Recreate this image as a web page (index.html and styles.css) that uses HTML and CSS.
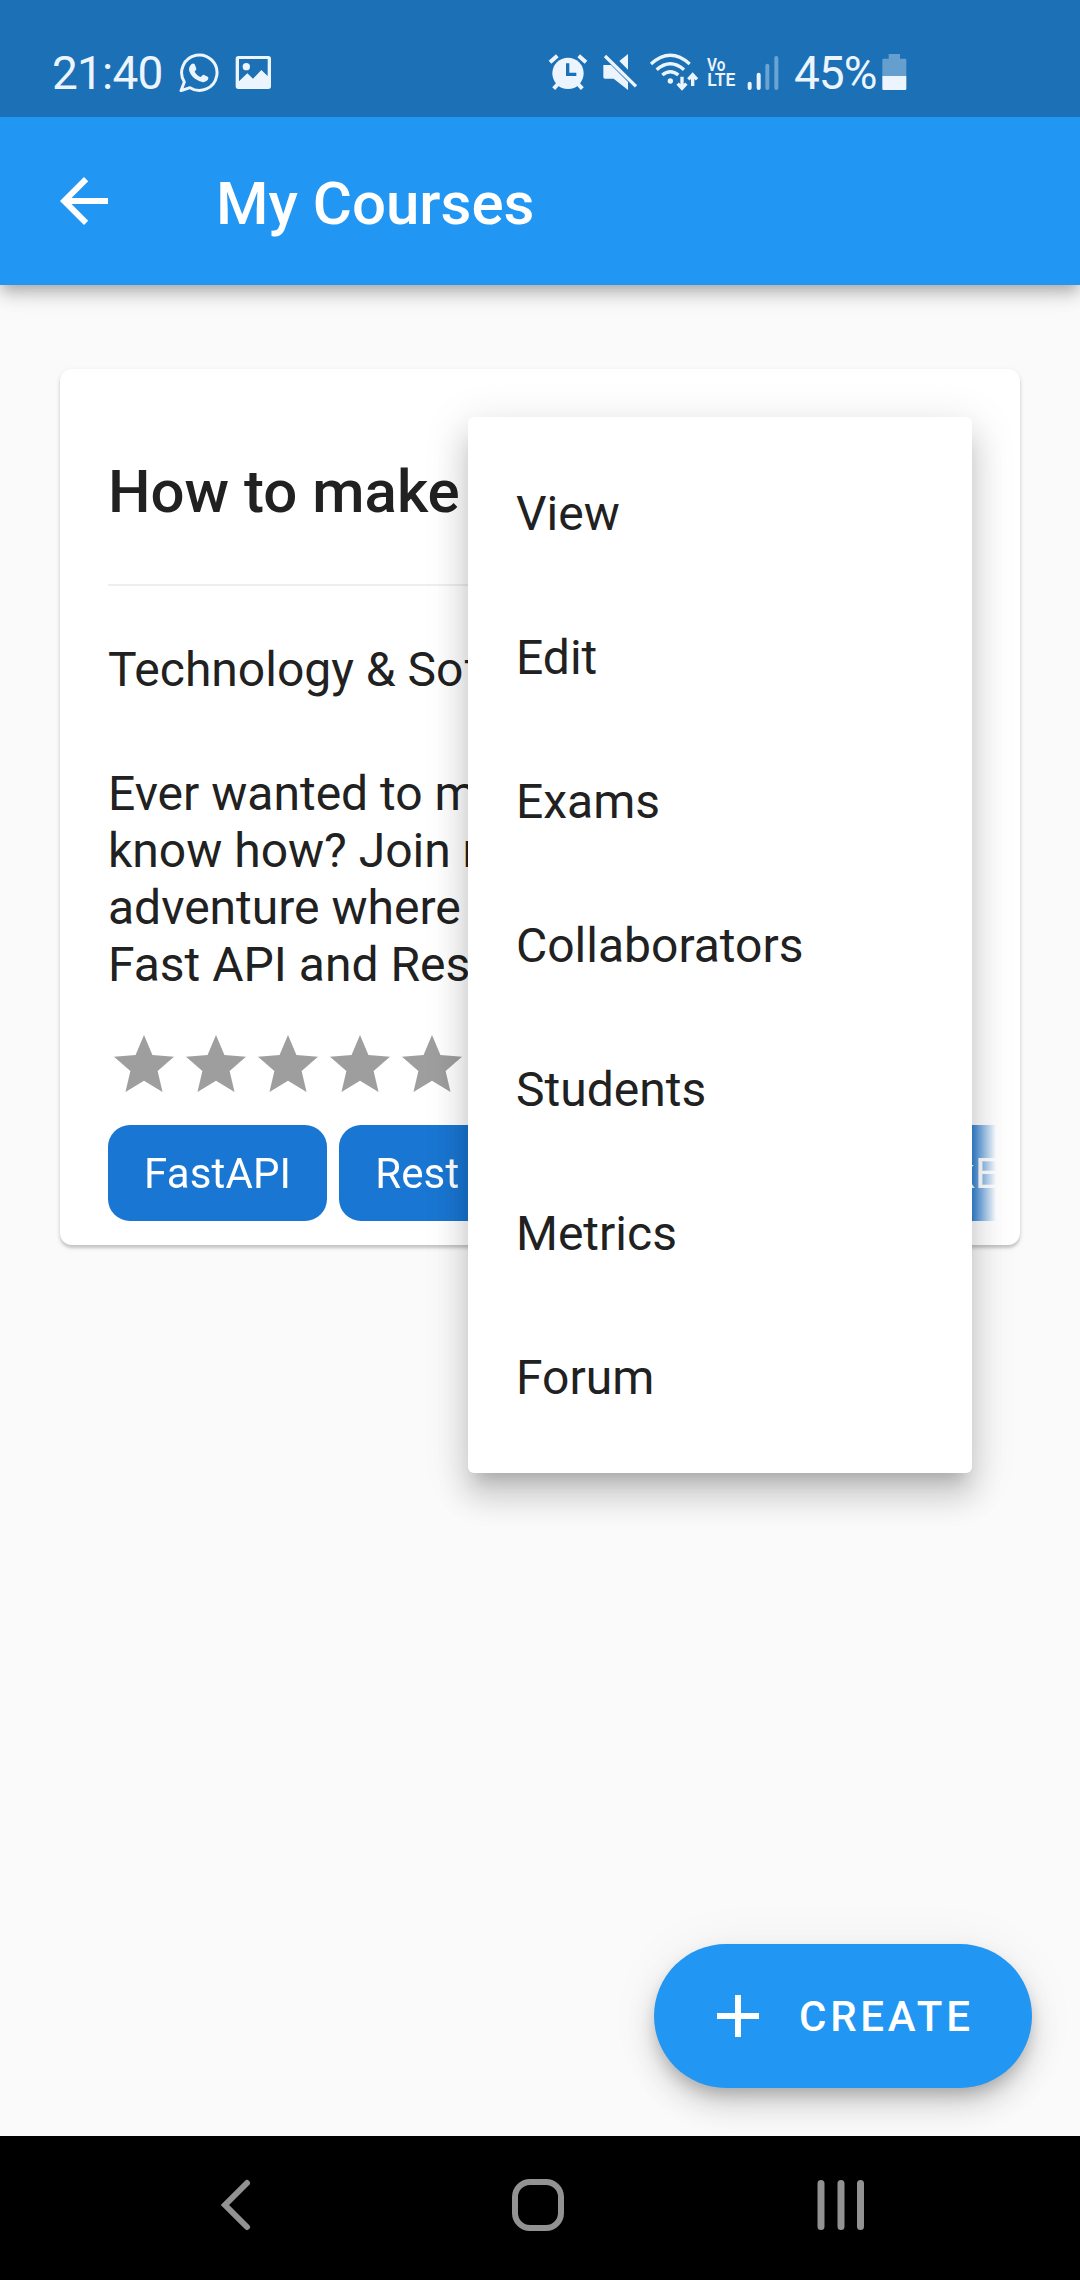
FILE: index.html
```
<!DOCTYPE html>
<html lang="en">
<head>
<meta charset="utf-8">
<title>My Courses</title>
<link rel="stylesheet" href="styles.css">
</head>
<body>
<div class="screen">
  <div class="status-bar">
    <span class="clock">21:40</span>
    <svg class="whatsapp" viewBox="447 66 120 120" width="40" height="40" fill="none">
      <path d="M463 156 L453 182 L480 173 A53 53 0 1 0 463 156Z" stroke="#ecf4fd" stroke-width="9" stroke-linejoin="round"/>
      <path d="M485 102c5-4 9-1 11 5l3 9c1 3-4 6-5 9 4 8 10 13 18 16 3-2 6-8 9-7l12 6c4 2 2 8-1 11-6 6-14 7-23 3-17-7-26-17-31-30-3-8 1-17 7-22z" fill="#ecf4fd"/>
    </svg>
    <svg class="photo" viewBox="614 66 111 120" width="37" height="40">
      <path fill="#ecf4fd" fill-rule="evenodd" d="M624 78h90q8 0 8 8v83q0 8-8 8h-90q-8 0-8-8V86q0-8 8-8zM626 87v67l25-24 17 16 25-26 19 18V87z"/>
      <circle cx="648" cy="110" r="11" fill="#ecf4fd"/>
    </svg>
    <div class="status-right">
      <svg viewBox="54 66 120 120" width="40" height="40" fill="none" stroke="#ecf4fd">
        <circle cx="114" cy="130" r="47" fill="#ecf4fd" stroke="none"/>
        <path stroke-width="12" d="M60 97l22-20M168 97l-22-20M71 176l14-15M157 176l-14-15"/>
        <path stroke="#1b70b6" stroke-width="10" d="M113 100v33h26"/>
      </svg>
      <svg class="mute" viewBox="216 66 108 120" width="36" height="40">
        <path fill="#ecf4fd" d="M220 105h23l51 51v24l-43-34h-26q-5 0-5-5zM294 72v47l-26-26z"/>
        <path stroke="#1b70b6" stroke-width="5" d="M233 72l92 90"/>
        <path stroke="#ecf4fd" stroke-width="10" d="M225 78l93 91"/>
      </svg>
      <svg class="wifi" viewBox="357 66 150 120" width="50" height="40" fill="none" stroke="#ecf4fd" stroke-width="10">
        <path d="M363 102Q421 50 479 102M380 119Q421 83 462 119M397 135Q421 115 445 135"/>
        <circle cx="421" cy="153" r="8" fill="#ecf4fd" stroke="none"/>
        <path d="M456 140v34M443 161l13 14 13-14M488 168v-30M475 148l13-14 13 14"/>
      </svg>
      <svg class="volte" viewBox="528 66 90 120" width="30" height="40" fill="#ecf4fd">
        <text x="531" y="122" textLength="55" lengthAdjust="spacingAndGlyphs">Vo</text>
        <text x="532" y="168" textLength="84" lengthAdjust="spacingAndGlyphs">LTE</text>
      </svg>
      <svg class="signal" viewBox="651 66 96 120" width="32" height="40" fill="none" stroke-width="12" stroke-linecap="round">
        <path stroke="#ecf4fd" d="M659 161v13M686 134v40"/>
        <path stroke="#6ba3d3" d="M712 107v67M739 84v90"/>
      </svg>
      <span class="percent">45%</span>
      <svg class="battery" viewBox="1058 66 75 120" width="25" height="40">
        <path fill="#659fd0" d="M1078 72h34v14h16q3 0 3 3v50h-72V89q0-3 3-3h16z"/>
        <path fill="#ecf4fd" d="M1059 138h72v38q0 4-4 4h-64q-4 0-4-4z"/>
      </svg>
    </div>
  </div>

  <header class="app-bar">
    <svg class="back" viewBox="0 0 24 24" width="72" height="72" fill="#fff"><path d="M20 11H7.830l5.590-5.590L12 4l-8 8 8 8 1.410-1.410L7.830 13H20v-2z"/></svg>
    <h1 class="app-title">My Courses</h1>
  </header>

  <main class="content">
    <article class="card">
      <h2 class="card-title">How to make</h2>
      <div class="card-body">
        <p class="category">Technology &amp; Software</p>
        <p class="description">Ever wanted to make<br>know how? Join me<br>adventure where<br>Fast API and Rest</p>
      </div>
      <div class="stars">
        <svg viewBox="0 0 24 24"><path d="M12 17.270L18.180 21l-1.640-7.030L22 9.240l-7.190-.61L12 2 9.190 8.630 2 9.240l5.460 4.730L5.820 21z"/></svg>
        <svg viewBox="0 0 24 24"><path d="M12 17.270L18.180 21l-1.640-7.030L22 9.240l-7.190-.61L12 2 9.190 8.630 2 9.240l5.460 4.730L5.820 21z"/></svg>
        <svg viewBox="0 0 24 24"><path d="M12 17.270L18.180 21l-1.640-7.030L22 9.240l-7.190-.61L12 2 9.190 8.630 2 9.240l5.460 4.730L5.820 21z"/></svg>
        <svg viewBox="0 0 24 24"><path d="M12 17.270L18.180 21l-1.640-7.030L22 9.240l-7.190-.61L12 2 9.190 8.630 2 9.240l5.460 4.730L5.820 21z"/></svg>
        <svg viewBox="0 0 24 24"><path d="M12 17.270L18.180 21l-1.640-7.030L22 9.240l-7.190-.61L12 2 9.190 8.630 2 9.240l5.460 4.730L5.820 21z"/></svg>
      </div>
      <div class="chips">
        <span class="chip">FastAPI</span>
        <span class="chip chip-wide">Rest</span>
        <span class="chip">BackEnd</span>
      </div>
    </article>
    <button class="fab">
      <svg viewBox="0 0 24 24" width="72" height="72" fill="#fff"><path d="M19 13h-6v6h-2v-6H5v-2h6V5h2v6h6v2z"/></svg>
      <span class="fab-label">CREATE</span>
    </button>
  </main>

  <nav class="nav-bar">
    <svg class="nav-back" viewBox="0 0 34 56" width="34" height="56" fill="none" stroke="#929292" stroke-width="6"><path stroke-linecap="round" d="M28 6L6 28l22 22"/></svg>
    <svg class="nav-home" viewBox="0 0 54 54" width="54" height="54" fill="none" stroke="#929292" stroke-width="6"><rect x="4" y="4" width="46" height="46" rx="15"/></svg>
    <svg class="nav-recents" viewBox="0 0 50 54" width="50" height="54" stroke="#929292" stroke-width="7" stroke-linecap="round"><path d="M5 5.500v43M25 5.500v43M44.500 5.500v43"/></svg>
  </nav>

  <ul class="menu">
    <li>View</li>
    <li>Edit</li>
    <li>Exams</li>
    <li>Collaborators</li>
    <li>Students</li>
    <li>Metrics</li>
    <li>Forum</li>
  </ul>
</div>
</body>
</html>
```
FILE: styles.css
```
* { box-sizing: border-box; margin: 0; padding: 0; }
body { font-family: Roboto, "Liberation Sans", sans-serif; color: #212121; background: #fafafa; }
svg { display: block; flex: none; }

.screen {
  position: relative;
  display: flex;
  flex-direction: column;
  width: 1080px;
  height: 2280px;
  overflow: hidden;
}

.status-bar {
  position: relative;
  z-index: 2;
  display: flex;
  height: 117px;
  flex: none;
  padding: 52px 173px 0 52px;
  background: #1b70b6;
  color: #ecf4fd;
}
.clock, .percent { font-size: 46px; line-height: 43px; white-space: nowrap; }
.clock { width: 127px; letter-spacing: -0.8px; }
.photo { margin-left: 16px; }
.status-right { display: flex; margin-left: auto; }
.mute { margin-left: 14px; }
.wifi { margin-left: 11px; }
.volte { margin-left: 7px; font-size: 54px; font-weight: 600; }
.signal { margin-left: 11px; }
.percent { width: 88px; margin-left: 15px; letter-spacing: -1px; }

.app-bar {
  position: relative;
  z-index: 1;
  display: flex;
  align-items: center;
  flex: none;
  height: 168px;
  padding-left: 48px;
  gap: 96px;
  background: #2196f3;
  color: #fff;
  box-shadow: 0 6px 12px -3px rgba(0,0,0,.2), 0 12px 15px rgba(0,0,0,.12), 0 3px 30px rgba(0,0,0,.08);
}
.app-title { font-size: 60px; font-weight: 500; line-height: 72px; padding-top: 6px; }

.content {
  display: flex;
  flex: 1;
  flex-direction: column;
  justify-content: space-between;
  padding: 84px 48px 48px 60px;
}
.card {
  display: flex;
  flex-direction: column;
  width: 960px;
  height: 876px;
  padding: 0 24px 24px 48px;
  border-radius: 12px;
  background: #fff;
  box-shadow: 0 3px 3px rgba(0,0,0,.17), 0 2px 6px rgba(0,0,0,.08);
}
.card-title {
  height: 217px;
  margin-right: 24px;
  padding-top: 87px;
  border-bottom: 2px solid #eee;
  font-size: 60px;
  font-weight: 500;
  line-height: 72px;
  white-space: nowrap;
}
.card-body { padding-top: 55px; font-size: 48px; line-height: 57px; white-space: nowrap; }
.description { padding-top: 67px; }
.stars { display: flex; margin-top: 36px; }
.stars svg { width: 72px; height: 72px; fill: #9e9e9e; }
.chips {
  display: flex;
  gap: 12px;
  margin-top: auto;
  overflow: hidden;
  -webkit-mask-image: linear-gradient(to right, #000 calc(100% - 27px), transparent);
  mask-image: linear-gradient(to right, #000 calc(100% - 27px), transparent);
}
.chip {
  flex: none;
  height: 96px;
  padding: 1px 36px 0;
  border-radius: 22px;
  background: #1976d2;
  color: #fff;
  font-size: 42px;
  line-height: 96px;
  letter-spacing: .15px;
}
.chip-wide { width: 495px; }

.fab {
  display: flex;
  align-items: center;
  align-self: flex-end;
  width: 378px;
  height: 144px;
  padding-left: 48px;
  gap: 25px;
  border: 0;
  border-radius: 72px;
  background: #2196f3;
  color: #fff;
  font: 500 42px/50px Roboto, "Liberation Sans", sans-serif;
  letter-spacing: 3.75px;
  box-shadow: 0 9px 15px -3px rgba(0,0,0,.2), 0 18px 30px rgba(0,0,0,.14), 0 3px 54px rgba(0,0,0,.06);
}
.fab-label { padding-top: 2px; }

.nav-bar {
  position: relative;
  display: flex;
  align-items: center;
  flex: none;
  height: 144px;
  padding: 0 214px 6px 219px;
  justify-content: space-between;
  background: #000;
}
.nav-home { margin-left: 7px; }

.menu {
  position: absolute;
  left: 468px;
  top: 417px;
  z-index: 3;
  width: 504px;
  height: 1056px;
  padding: 25px 48px 23px;
  border-radius: 6px;
  background: #fff;
  list-style: none;
  font-size: 48px;
  line-height: 144px;
  box-shadow: 0 15px 15px -9px rgba(0,0,0,.16), 0 24px 30px 3px rgba(0,0,0,.12), 0 9px 42px 6px rgba(0,0,0,.1);
}
```
